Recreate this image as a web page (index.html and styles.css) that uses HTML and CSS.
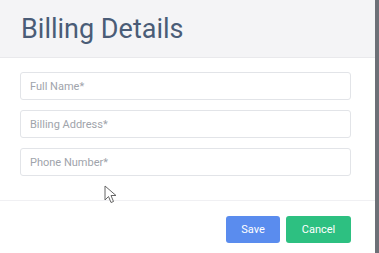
FILE: index.html
```html
<!DOCTYPE html>
<html lang="en">
<head>
    <meta charset="UTF-8">
    <title>Billing Details</title>
    <link rel="stylesheet" href="styles.css">
</head>
<body>
    <div class="screen">
        <div class="modal">
            <div class="modal-header">
                <h1 class="title">Billing Details</h1>
            </div>
            <div class="modal-body">
                <input class="field" type="text" placeholder="Full Name*">
                <input class="field" type="text" placeholder="Billing Address*">
                <input class="field" type="text" placeholder="Phone Number*">
            </div>
            <div class="modal-footer">
                <button class="button save">Save</button>
                <button class="button cancel">Cancel</button>
            </div>
        </div>
        <div class="edge"></div>
    </div>
    <svg class="cursor" width="14" height="20" viewBox="0 0 14 20">
        <path d="M1 1 L1 15 L4.5 11.5 L7 17.5 L9.5 16.5 L7 10.5 L12 10.5 Z" fill="#fff" stroke="#666" stroke-width="1" stroke-linejoin="round"/>
    </svg>
</body>
</html>
```
FILE: styles.css
```css
body {
    margin: 0;
    padding: 0;
    background-color: #fff;
    font-family: Roboto, "Liberation Sans", sans-serif;
}
.screen {
    display: flex;
    height: 253px;
}
.modal {
    flex: 1;
    display: flex;
    flex-direction: column;
}
.edge {
    width: 4px;
    background-color: #6d7077;
}
.modal-header {
    height: 57px;
    padding-left: 21px;
    background-color: #f4f4f6;
    border-bottom: 1px solid #e9e9ec;
    display: flex;
    align-items: center;
}
.title {
    margin: 0;
    font-size: 27px;
    font-weight: 400;
    color: #4a5c77;
}
.modal-body {
    display: flex;
    flex-direction: column;
    gap: 10px;
    padding: 14px 24px 24px 20px;
    border-bottom: 1px solid #f0f0f3;
}
.field {
    height: 28px;
    box-sizing: border-box;
    padding: 0 9px;
    border: 1px solid #e2e4e8;
    border-radius: 3px;
    font-family: inherit;
    font-size: 11px;
    color: #333;
    outline: none;
}
.field::placeholder {
    color: #a0a4ab;
}
.modal-footer {
    display: flex;
    justify-content: flex-end;
    gap: 6px;
    padding: 15px 24px 0 0;
}
.button {
    height: 27px;
    border: none;
    border-radius: 3px;
    color: #fff;
    font-family: inherit;
    font-size: 11px;
    cursor: pointer;
}
.save {
    width: 54px;
    background-color: #5a8cee;
}
.cancel {
    width: 65px;
    background-color: #2dc081;
}
.cursor {
    position: absolute;
    left: 104px;
    top: 185px;
}
```
